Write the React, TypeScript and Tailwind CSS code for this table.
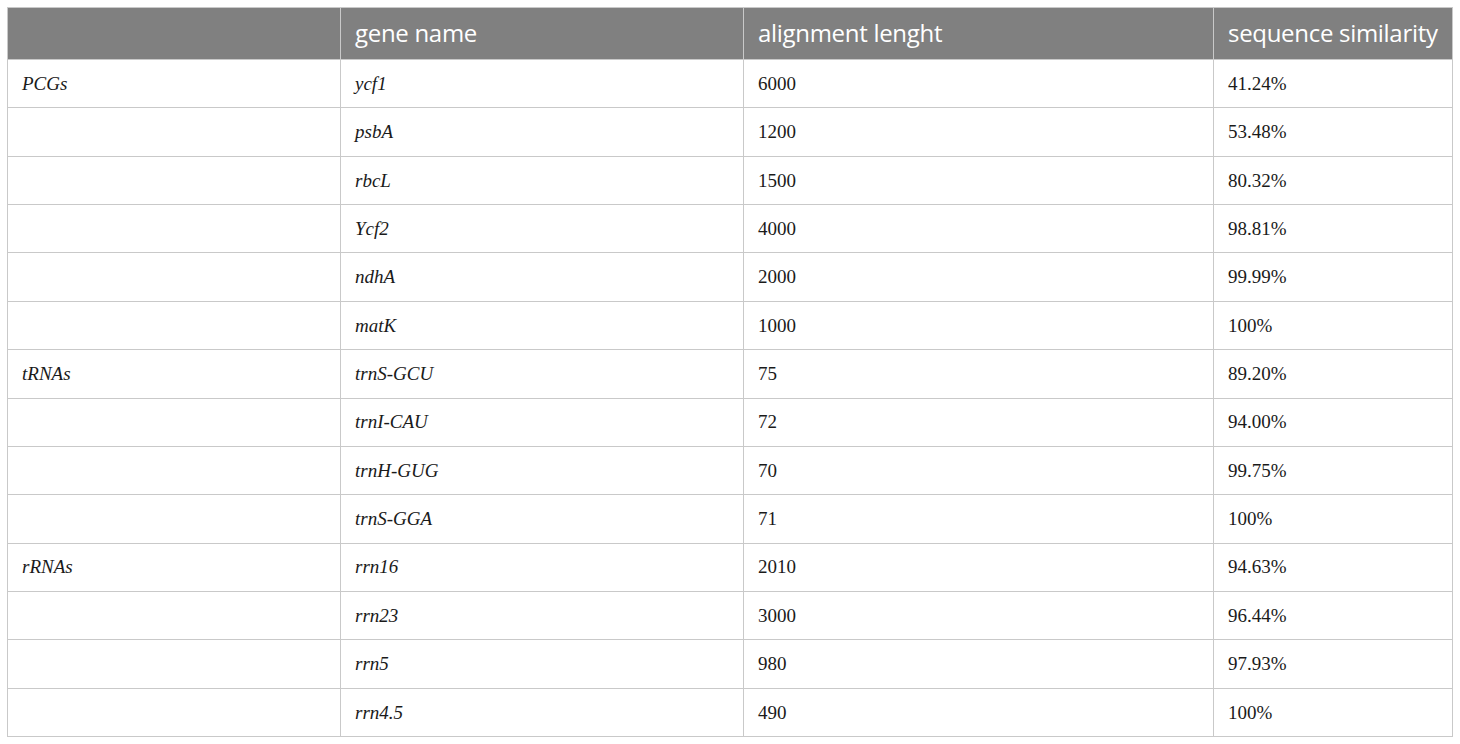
const rows: [string, string, string, string][] = [
  ["PCGs", "ycf1", "6000", "41.24%"],
  ["", "psbA", "1200", "53.48%"],
  ["", "rbcL", "1500", "80.32%"],
  ["", "Ycf2", "4000", "98.81%"],
  ["", "ndhA", "2000", "99.99%"],
  ["", "matK", "1000", "100%"],
  ["tRNAs", "trnS-GCU", "75", "89.20%"],
  ["", "trnI-CAU", "72", "94.00%"],
  ["", "trnH-GUG", "70", "99.75%"],
  ["", "trnS-GGA", "71", "100%"],
  ["rRNAs", "rrn16", "2010", "94.63%"],
  ["", "rrn23", "3000", "96.44%"],
  ["", "rrn5", "980", "97.93%"],
  ["", "rrn4.5", "490", "100%"],
]

const headers = ["", "gene name", "alignment lenght", "sequence similarity"]

export default function App() {
  return (
    <div className="min-h-screen bg-white pl-[7px] pt-[7px]">
      <div className="grid w-[1446px] h-[730px] grid-cols-[332px_402px_469px_1fr] grid-rows-[51px_repeat(14,minmax(0,1fr))] gap-px bg-[#c9c9c9] p-px">
        {headers.map((h, i) => (
          <div
            key={i}
            className="flex items-center bg-[#808080] pl-[14px] pb-[2px] text-[24px] text-white font-['Open_Sans',sans-serif] tracking-[-0.3px]"
          >
            {h}
          </div>
        ))}
        {rows.map((r, ri) =>
          r.map((c, ci) => (
            <div
              key={ri + "-" + ci}
              className={
                "flex items-center bg-white pl-[14px] pt-[1px] text-[19px] text-[#1a1a1a] font-['Liberation_Serif',serif] " +
                (ci < 2 ? "italic" : "")
              }
            >
              {c}
            </div>
          ))
        )}
      </div>
    </div>
  )
}
